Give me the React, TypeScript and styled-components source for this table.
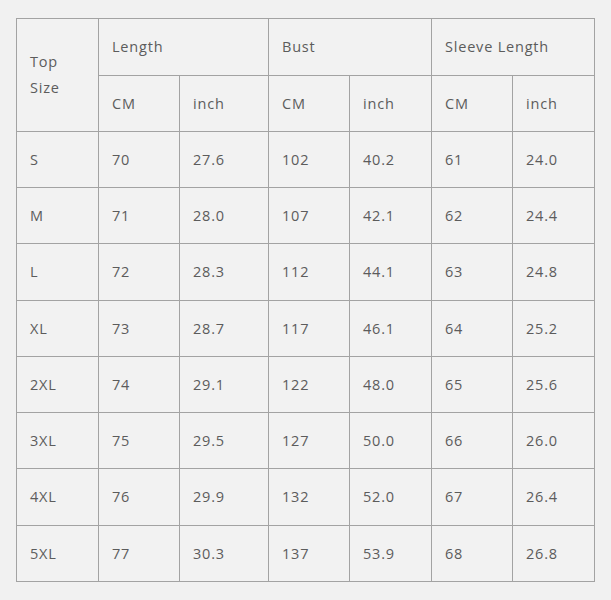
import React, { FC } from "react";
import styled, { createGlobalStyle } from "styled-components";

type Row = { size: string; values: string[]; tall?: boolean };

const rows: Row[] = [
    { size: "S", values: ["70", "27.6", "102", "40.2", "61", "24.0"] },
    { size: "M", values: ["71", "28.0", "107", "42.1", "62", "24.4"] },
    { size: "L", values: ["72", "28.3", "112", "44.1", "63", "24.8"], tall: true },
    { size: "XL", values: ["73", "28.7", "117", "46.1", "64", "25.2"] },
    { size: "2XL", values: ["74", "29.1", "122", "48.0", "65", "25.6"] },
    { size: "3XL", values: ["75", "29.5", "127", "50.0", "66", "26.0"] },
    { size: "4XL", values: ["76", "29.9", "132", "52.0", "67", "26.4"], tall: true },
    { size: "5XL", values: ["77", "30.3", "137", "53.9", "68", "26.8"] },
];

const groups = ["Length", "Bust", "Sleeve Length"];
const columnWidths = [82, 81, 89, 81, 82, 81, 82];

const GlobalStyle = createGlobalStyle`
    body {
        margin: 0;
        background: #f1f1f1;
    }
`;

const Page = styled.div`
    width: 611px;
    height: 600px;
    padding: 18px 0 0 16px;
    box-sizing: border-box;
    background: #f1f1f1;
`;

const SizeTable = styled.table`
    border-collapse: collapse;
    table-layout: fixed;
    width: 578px;
    font-family: "Open Sans", "Liberation Sans", sans-serif;
    font-size: 14.5px;
    letter-spacing: 0.8px;
    color: #5c5c5c;
    background: #f2f2f2;
`;

const Cell = styled.td<{ $tall?: boolean }>`
    border: 1px solid #a3a3a3;
    padding: 0 0 0 13px;
    height: ${(props) => (props.$tall ? "56px" : "55px")};
    line-height: 26px;
    text-align: left;
    vertical-align: middle;
    font-weight: 400;
`;

const App: FC = () => (
    <>
        <GlobalStyle />
        <Page>
            <SizeTable>
                <colgroup>
                    {columnWidths.map((w, i) => (
                        <col key={i} style={{ width: w }} />
                    ))}
                </colgroup>
                <thead>
                    <tr>
                        <Cell as="th" rowSpan={2}>
                            Top
                            <br />
                            Size
                        </Cell>
                        {groups.map((g) => (
                            <Cell as="th" key={g} colSpan={2} $tall>
                                {g}
                            </Cell>
                        ))}
                    </tr>
                    <tr>
                        {groups.map((g) => (
                            <React.Fragment key={g}>
                                <Cell as="th">CM</Cell>
                                <Cell as="th">inch</Cell>
                            </React.Fragment>
                        ))}
                    </tr>
                </thead>
                <tbody>
                    {rows.map((r) => (
                        <tr key={r.size}>
                            <Cell $tall={r.tall}>{r.size}</Cell>
                            {r.values.map((v, i) => (
                                <Cell key={i} $tall={r.tall}>
                                    {v}
                                </Cell>
                            ))}
                        </tr>
                    ))}
                </tbody>
            </SizeTable>
        </Page>
    </>
);

export default App;
